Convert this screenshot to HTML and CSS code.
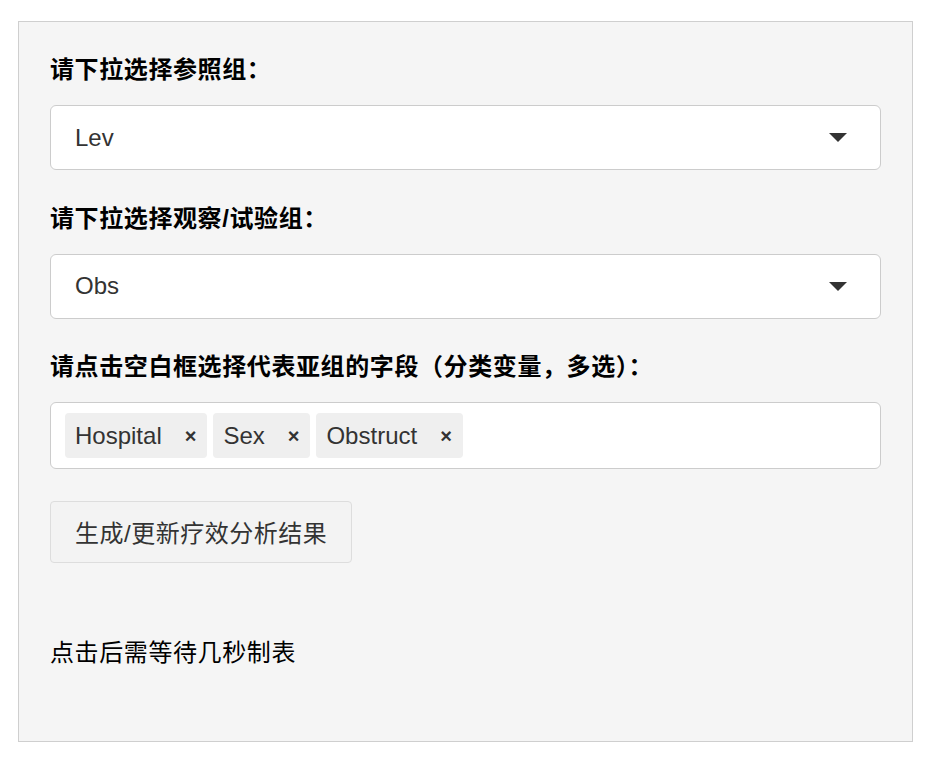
FILE: index.html
```html
<html lang="zh">
  <head>
    <meta charset="UTF-8" />
    <meta name="viewport" content="width=device-width, initial-scale=1.0" />
    <title>亚组分析</title>
    <link rel="stylesheet" href="styles.css">
  </head>
  <body>
    <div class="well">
      <!-- 参照组 -->
      <div class="form-group">
        <label class="control-label">请下拉选择参照组：</label>
        <div class="select-box">
          <span class="item">Lev</span>
          <span class="caret"></span>
        </div>
      </div>
      <!-- 观察组 -->
      <div class="form-group">
        <label class="control-label">请下拉选择观察/试验组：</label>
        <div class="select-box">
          <span class="item">Obs</span>
          <span class="caret"></span>
        </div>
      </div>
      <!-- 亚组字段，多选 -->
      <div class="form-group">
        <label class="control-label">请点击空白框选择代表亚组的字段（分类变量，多选）：</label>
        <div class="multi-box">
          <div class="tag">Hospital<span class="remove">×</span></div>
          <div class="tag">Sex<span class="remove">×</span></div>
          <div class="tag">Obstruct<span class="remove">×</span></div>
        </div>
      </div>
      <button class="btn" type="button">生成/更新疗效分析结果</button>
      <p class="note">点击后需等待几秒制表</p>
    </div>
  </body>
</html>
```

FILE: styles.css
```css
body {
  margin: 0;
  font-family: "Liberation Sans", Arial, "Noto Sans CJK SC", sans-serif;
  font-size: 24px;
  line-height: 34px;
  color: #333;
  background: #fff;
}

.well {
  box-sizing: border-box;
  width: 895px;
  margin: 21px 0 0 18px;
  padding: 31px 31px 71px;
  background-color: #f5f5f5;
  border: 1px solid #cfcfcf;
}

.form-group {
  margin-bottom: 31.5px;
}

.control-label {
  display: block;
  margin-bottom: 18px;
  font-weight: bold;
  color: #000;
  letter-spacing: 0.6px;
}

/* 单选下拉框 */
.select-box {
  box-sizing: border-box;
  height: 65px;
  display: flex;
  align-items: center;
  justify-content: space-between;
  padding: 0 24px;
  background: #fff;
  border: 1px solid #ccc;
  border-radius: 6px;
}
.select-box .caret {
  width: 0;
  height: 0;
  margin-right: 9px;
  border-left: 9px solid transparent;
  border-right: 9px solid transparent;
  border-top: 9px solid #333;
}

/* 多选框 */
.multi-box {
  box-sizing: border-box;
  height: 67px;
  display: flex;
  align-items: center;
  gap: 6px;
  padding: 0 14px;
  background: #fff;
  border: 1px solid #ccc;
  border-radius: 6px;
}
.tag {
  display: flex;
  align-items: center;
  height: 45px;
  padding: 0 11px 0 10px;
  background: #efefef;
  border-radius: 4px;
}
.tag .remove {
  margin-left: 23px;
  font-size: 20px;
  font-weight: bold;
  color: #333;
}

.btn {
  box-sizing: border-box;
  height: 62px;
  padding: 0 24px;
  font-family: inherit;
  font-size: 24px;
  letter-spacing: 0.5px;
  color: #333;
  background: #f3f3f3;
  border: 1px solid #ddd;
  border-radius: 4px;
}

.note {
  margin: 73px 0 0;
  color: #000;
  letter-spacing: 0.6px;
}
```
